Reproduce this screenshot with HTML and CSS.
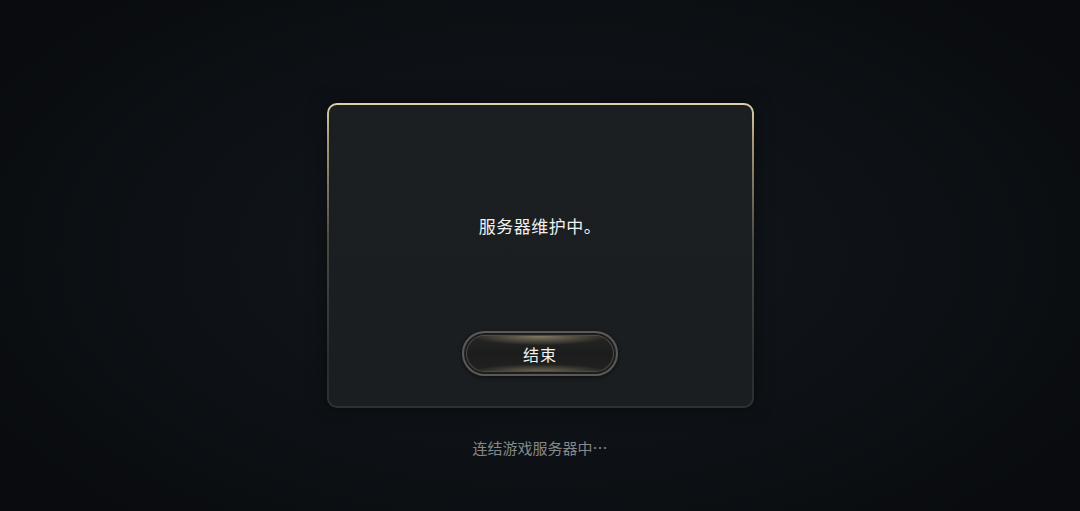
FILE: index.html
```html
<!DOCTYPE html>
<html lang="zh-CN">
<head>
    <meta charset="UTF-8">
    <meta name="viewport" content="width=device-width, initial-scale=1.0">
    <title>服务器维护</title>
    <link rel="stylesheet" href="styles.css">
</head>
<body>
    <div class="screen">
        <div class="dialog">
            <p class="message">服务器维护中。</p>
            <button class="end-btn" type="button">结束</button>
        </div>
        <p class="status">连结游戏服务器中…</p>
    </div>
</body>
</html>
```

FILE: styles.css
```css
html, body {
    margin: 0;
    height: 100%;
}

body {
    background: radial-gradient(ellipse 60% 70% at 50% 50%, #13181d 0%, #0d1115 60%, #090b0e 100%);
    font-family: "Noto Sans CJK SC", "Noto Sans", sans-serif;
    overflow: hidden;
}

.screen {
    height: 511px;
    display: flex;
    flex-direction: column;
    align-items: center;
    padding-top: 103px;
    box-sizing: border-box;
}

/* gold rim on top, fading out down the sides */
.dialog {
    width: 427px;
    height: 305px;
    box-sizing: border-box;
    border: 2px solid transparent;
    border-radius: 10px;
    background:
        linear-gradient(#1b1f22, #1a1e21) padding-box,
        linear-gradient(180deg, #e0d1ac 0%, #a8997a 12%, #4a4a44 45%, #2a2e31 85%, #2c3134 100%) border-box;
    box-shadow: 0 0 18px rgba(0, 0, 0, 0.5);
    display: flex;
    flex-direction: column;
    align-items: center;
}

.message {
    margin: 109px 0 0;
    color: #f0f0ee;
    font-size: 17px;
    line-height: 24px;
    letter-spacing: 0.5px;
}

.end-btn {
    margin-top: 93px;
    width: 156px;
    height: 45px;
    border-radius: 23px;
    border: 2px solid #5b5955;
    background:
        radial-gradient(ellipse 45% 22% at 50% 8%, rgba(205, 190, 150, 0.55), transparent),
        radial-gradient(ellipse 45% 18% at 50% 94%, rgba(205, 190, 150, 0.45), transparent),
        linear-gradient(180deg, #262624 0%, #1b1c1c 50%, #222220 100%);
    box-shadow:
        inset 0 0 0 2px #1c1d1d,
        inset 0 0 0 3px #4d4b47,
        0 1px 4px rgba(0, 0, 0, 0.6);
    color: #f2f2f0;
    font-family: "Noto Sans CJK SC", "Noto Sans", sans-serif;
    font-size: 16px;
    letter-spacing: 1px;
    padding: 0;
    cursor: pointer;
}

.status {
    margin: 29px 0 0;
    color: #85888b;
    font-size: 15px;
    line-height: 22px;
}
```
